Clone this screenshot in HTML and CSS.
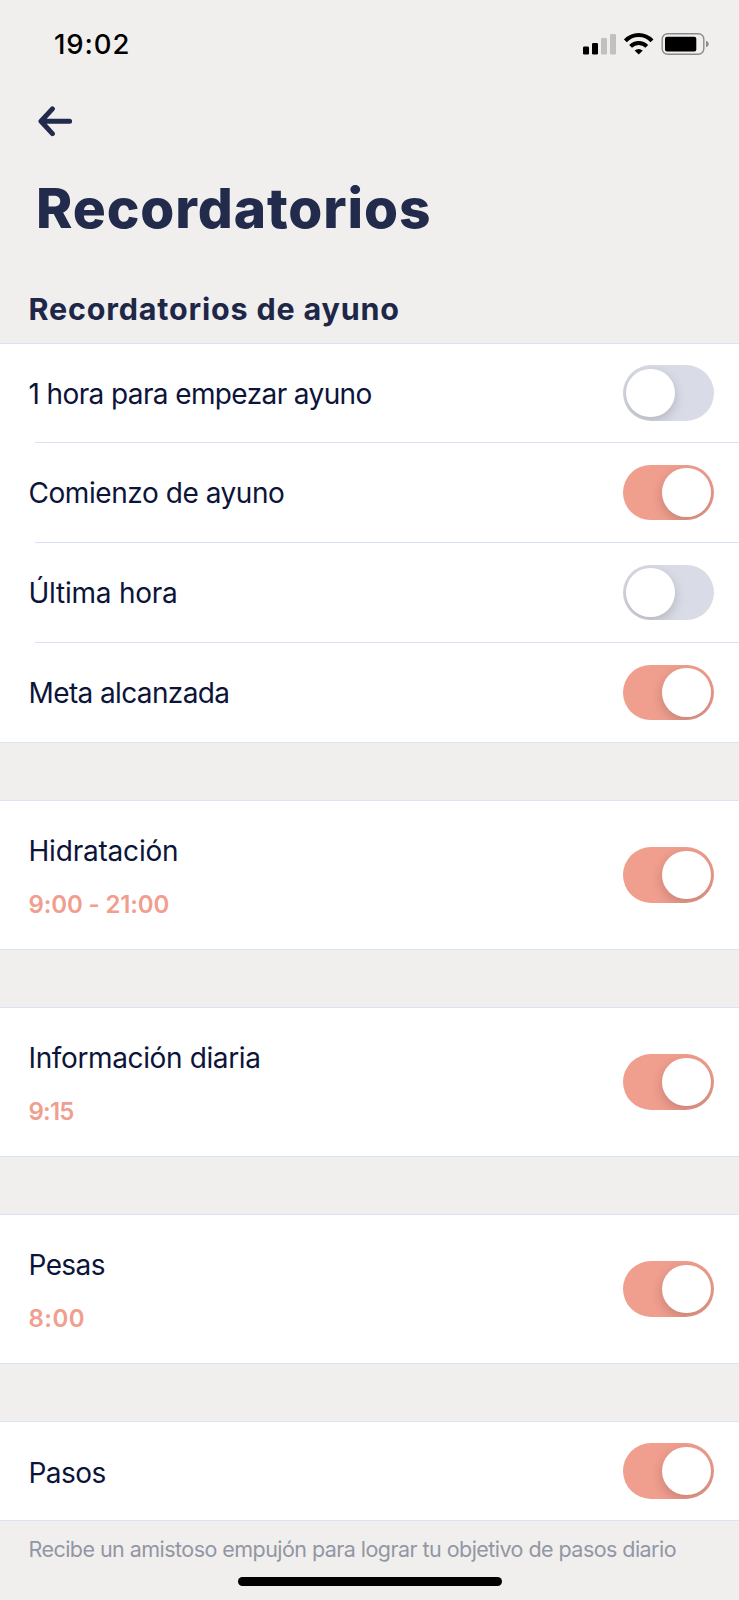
FILE: index.html
```html
<!DOCTYPE html>
<html lang="es">
<head>
<meta charset="utf-8">
<title>Recordatorios</title>
<link rel="stylesheet" href="styles.css">
</head>
<body>
<header class="status">
  <span class="clock">19:02</span>
  <svg class="status-icons" width="128" height="24" viewBox="0 0 128 24">
    <rect x="1" y="14.500" width="6" height="8" rx="1.300"/>
    <rect x="10" y="11" width="6" height="11.500" rx="1.300"/>
    <rect x="19" y="6" width="6" height="16.500" rx="1.300" fill="#c0c0be"/>
    <rect x="28" y="2" width="6" height="20.500" rx="1.300" fill="#c0c0be"/>
    <g fill="none" stroke="#000" stroke-width="4">
      <path d="M43.400 8.800a18 18 0 0 1 26.600 0"/>
      <path d="M48.600 14.400a11.500 11.500 0 0 1 16.200 0"/>
    </g>
    <path d="M52.600 18.600q4.100-3.200 8.200 0L56.700 22.600z"/>
    <rect x="80.200" y="1.700" width="41.600" height="20.600" rx="5.500" fill="none" stroke="#8b8b89" stroke-width="1.400"/>
    <rect x="83" y="4.800" width="31.300" height="14.800" rx="2"/>
    <path d="M124 8.800q2.800 1 2.800 3.200t-2.800 3.200z" fill="#8b8b89"/>
  </svg>
</header>

<div class="heading">
  <svg class="back" width="38" height="32" viewBox="0 0 38 32" fill="none" stroke="#222b4c" stroke-width="5" stroke-linecap="round" stroke-linejoin="round">
    <path d="M16.400 3.900L5 16.300l11.400 12.300M6 16.300h27.600"/>
  </svg>
  <h1 class="title">Recordatorios</h1>
</div>
<h2 class="subtitle">Recordatorios de ayuno</h2>

<main class="groups">
  <section class="group">
    <div class="row"><span class="label label-hour">1 hora para empezar ayuno</span><span class="toggle"></span></div>
    <div class="row"><span class="label label-start">Comienzo de ayuno</span><span class="toggle on"></span></div>
    <div class="row"><span class="label label-last">Última hora</span><span class="toggle"></span></div>
    <div class="row"><span class="label label-goal">Meta alcanzada</span><span class="toggle on"></span></div>
  </section>
  <section class="group">
    <div class="row tall">
      <div class="info"><span class="label label-water">Hidratación</span><span class="time time-range">9:00 - 21:00</span></div>
      <span class="toggle on"></span>
    </div>
  </section>
  <section class="group">
    <div class="row tall">
      <div class="info"><span class="label label-daily">Información diaria</span><span class="time time-daily">9:15</span></div>
      <span class="toggle on"></span>
    </div>
  </section>
  <section class="group">
    <div class="row tall">
      <div class="info"><span class="label label-weight">Pesas</span><span class="time time-weight">8:00</span></div>
      <span class="toggle on"></span>
    </div>
  </section>
  <section class="group">
    <div class="row"><span class="label label-steps">Pasos</span><span class="toggle on"></span></div>
  </section>
</main>

<p class="note">Recibe un amistoso empujón para lograr tu objetivo de pasos diario</p>
<div class="home-indicator"></div>
</body>
</html>
```
FILE: styles.css
```css
* { box-sizing: border-box; }

body {
  margin: 0;
  height: 1600px;
  overflow: hidden;
  background: #f0efed;
  color: #0c1439;
  font-family: Inter, "Liberation Sans", sans-serif;
}

.status {
  display: flex;
  align-items: center;
  justify-content: space-between;
  height: 88px;
  padding: 0 29px 0 54px;
  color: #000;
}
.clock { font-size: 27.5px; font-weight: 550; letter-spacing: 0.9px; }
.status-icons { display: block; }

.heading { padding: 17px 35px 0 36px; }
.back { display: block; }
.title {
  margin: 38px 0 0;
  font-size: 55px;
  line-height: 66px;
  font-weight: 800;
  letter-spacing: 0.9px;
  color: #222b4c;
}
.subtitle {
  margin: 48px 0 14px;
  padding-left: 28.5px;
  font-size: 30.5px;
  line-height: 40px;
  font-weight: 700;
  letter-spacing: 0.81px;
  color: #1e2748;
}

.groups { display: flex; flex-direction: column; gap: 57px; }
.group {
  background: #fff;
  border-top: 1px solid #dce3f3;
  border-bottom: 1px solid #dce3f3;
}
.row {
  display: flex;
  align-items: center;
  justify-content: space-between;
  height: 98px;
  padding: 0 25px 0 28.5px;
}
.row + .row {
  height: 100px;
  border-top: 1px solid #dce3f3;
  border-image: linear-gradient(to right, transparent 36px, #d8e0f3 36px) 1;
}
.row > .label, .info { padding-top: 1px; }
.group:last-child .row > .label { padding-top: 3px; }
.row.tall { height: 148px; }

.info { display: flex; flex-direction: column; gap: 18px; }
.label { font-size: 28px; line-height: 40px; white-space: nowrap; }
.label-hour { letter-spacing: -0.61px; }
.label-start { letter-spacing: -0.44px; }
.label-last { letter-spacing: -0.24px; }
.label-goal { letter-spacing: -0.62px; }
.label-water { letter-spacing: -0.2px; }
.label-daily { letter-spacing: -0.37px; }
.label-weight { letter-spacing: -0.6px; }
.label-steps { letter-spacing: -0.55px; }

.time { font-size: 24px; line-height: 32px; font-weight: 600; color: #f09e8e; }
.time-range { letter-spacing: -0.14px; }
.time-daily { letter-spacing: -0.8px; }
.time-weight { letter-spacing: 0.5px; }

.toggle {
  display: flex;
  align-items: center;
  flex: none;
  width: 91px;
  height: 55.5px;
  padding: 0 3.3px;
  border-radius: 28px;
  background: #d9dce6;
  overflow: hidden;
}
.toggle::before {
  content: "";
  width: 48.5px;
  height: 48.5px;
  border-radius: 50%;
  background: #fff;
  box-shadow: 0 4px 12px rgba(0, 0, 0, 0.18);
}
.toggle.on { justify-content: flex-end; background: #f09e8e; }

.note {
  margin: 13px 0 13px;
  padding-left: 28.5px;
  font-size: 21.5px;
  line-height: 30px;
  letter-spacing: -0.55px;
  white-space: nowrap;
  color: #9396a4;
}
.home-indicator {
  width: 264px;
  height: 9px;
  margin: 0 auto;
  border-radius: 5px;
  background: #000;
}
```
